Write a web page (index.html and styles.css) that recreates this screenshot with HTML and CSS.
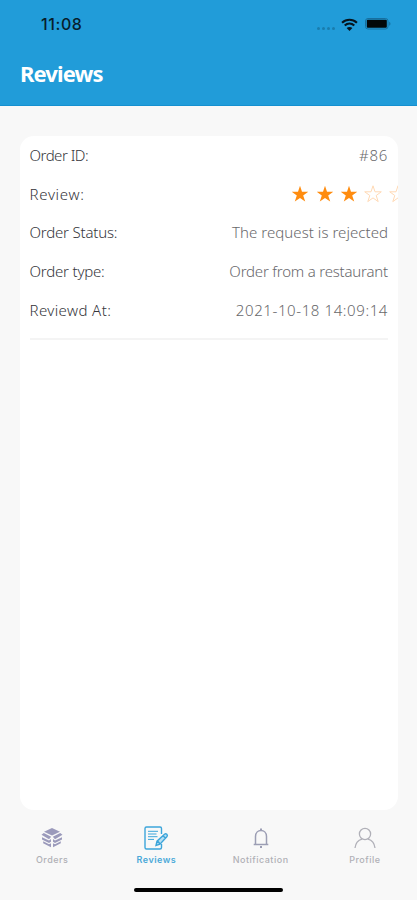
FILE: index.html
```html
<!DOCTYPE html>
<html lang="en">
<head>
  <meta charset="UTF-8" />
  <meta name="viewport" content="width=device-width, initial-scale=1.0"/>
  <title>Reviews</title>
  <link rel="stylesheet" href="styles.css">
</head>
<body>
  <div class="header">
    <div class="status-bar">
      <span class="time">11:08</span>
      <div class="status-icons">
        <div class="signal"><i></i><i></i><i></i><i></i></div>
        <svg class="wifi" width="17" height="13" viewBox="0 0 16 12">
          <path d="M1 4.300C5 .6 11 .6 15 4.300M3.500 7c2.600-2.400 6.400-2.400 9 0" fill="none" stroke="#06141e" stroke-width="2"/>
          <path d="M8 12 5.300 9.300c1.500-1.400 3.900-1.400 5.400 0z" fill="#06141e"/>
        </svg>
        <svg class="battery" width="27" height="12" viewBox="0 0 27 12">
          <rect x=".5" y=".5" width="22.500" height="10.500" rx="2.500" fill="none" stroke="#176f9f"/>
          <rect x="1.800" y="1.800" width="20" height="8" rx="1" fill="#020709"/>
          <path d="M24.200 3.800c1.700.6 1.700 3.400 0 4z" fill="#176f9f"/>
        </svg>
      </div>
    </div>
    <h1 class="title">Reviews</h1>
  </div>

  <div class="card">
    <div class="row">
      <span class="label order-id">Order ID:</span>
      <span class="value number">#86</span>
    </div>
    <div class="row">
      <span class="label review">Review:</span>
      <div class="stars">
        <svg class="star" viewBox="0 0 18 18"><path d="M9 .8l2 6h6.300l-5.100 3.700 2 6.100L9 12.900l-5.200 3.700 2-6.100L.7 6.800H7z"/></svg>
        <svg class="star" viewBox="0 0 18 18"><path d="M9 .8l2 6h6.300l-5.100 3.700 2 6.100L9 12.900l-5.200 3.700 2-6.100L.7 6.800H7z"/></svg>
        <svg class="star" viewBox="0 0 18 18"><path d="M9 .8l2 6h6.300l-5.100 3.700 2 6.100L9 12.900l-5.200 3.700 2-6.100L.7 6.800H7z"/></svg>
        <svg class="star empty" viewBox="0 0 18 18"><path d="M9 .8l2 6h6.300l-5.100 3.700 2 6.100L9 12.900l-5.200 3.700 2-6.100L.7 6.800H7z"/></svg>
        <svg class="star empty" viewBox="0 0 18 18"><path d="M9 .8l2 6h6.300l-5.100 3.700 2 6.100L9 12.900l-5.200 3.700 2-6.100L.7 6.800H7z"/></svg>
      </div>
    </div>
    <div class="row">
      <span class="label">Order Status:</span>
      <span class="value status">The request is rejected</span>
    </div>
    <div class="row">
      <span class="label">Order type:</span>
      <span class="value type">Order from a restaurant</span>
    </div>
    <div class="row">
      <span class="label reviewed">Reviewd At:</span>
      <span class="value date">2021-10-18 14:09:14</span>
    </div>
    <div class="divider"></div>
  </div>

  <div class="tabs">
    <div class="tab">
      <svg width="24" height="26" viewBox="0 0 24 26">
        <g fill="#9b9abb">
          <path d="M12 3 20 6.800 12 10.500 4 6.800z"/>
          <path d="M1.500 9.800 3.800 8l7.400 3.700-2.200 2.600zM22.500 9.800 20.200 8l-7.400 3.700 2.200 2.600z"/>
          <path d="M2 12.300l7 3.300 2-1.700v2.800l-2 1.300-7-3.600zM22 12.300l-7 3.300-2-1.700v2.800l2 1.300 7-3.600z"/>
          <path d="M3.200 16.200l5.800 3 2-1v4l-7.800-4zM20.800 16.200 15 19.200l-2-1v4l7.800-4z"/>
        </g>
      </svg>
      <span>Orders</span>
    </div>
    <div class="tab active">
      <svg width="26" height="26" viewBox="0 0 26 26" fill="none" stroke="#3da5da" stroke-width="1.400">
        <path d="M18.500 9V3.500q0-1.500-1.500-1.500H3.500Q2 2 2 3.500v19Q2 24 3.500 24H17q1.500 0 1.500-1.500V19"/>
        <path d="M5 6.300h10M5 9h8.500M5 11.700h9.500M5 14.400h6" stroke-width="1"/>
        <path d="M13 20.500l1-4.300 7.500-7q1.200-1 2.300.1t.2 2.200l-7 7.600zM20 10.700l2.400 2.300M14.500 16l2.500 2.800" fill="#b9dff3"/>
      </svg>
      <span>Reviews</span>
    </div>
    <div class="tab">
      <svg width="24" height="26" viewBox="0 0 24 26" fill="none" stroke="#9c9eb4" stroke-width="1.500">
        <path d="M4.700 19.400h14.600M6.500 19v-7.500c0-8 11-8 11 0V19"/>
        <path d="M12 3.500v2M11 22h2" stroke-width="2"/>
      </svg>
      <span>Notification</span>
    </div>
    <div class="tab">
      <svg width="24" height="26" viewBox="0 0 24 26" fill="none" stroke="#b0b0b8" stroke-width="1.300">
        <circle cx="12" cy="9" r="5.600"/>
        <path d="M2 23c.6-5.300 3.700-8 7-8.900M22 23c-.6-5.300-3.700-8-7-8.900"/>
      </svg>
      <span>Profile</span>
    </div>
  </div>
  <div class="home-bar"></div>
</body>
</html>
```

FILE: styles.css
```css
* {
  box-sizing: border-box;
}

body {
  height: 900px;
  margin: 0;
  display: flex;
  flex-direction: column;
  background: #f8f8f8;
  font-family: "Noto Sans", sans-serif;
  overflow: hidden;
}

.header {
  height: 106px;
  background: #219cd9;
  border-bottom: 1px solid #1590d0;
}

.status-bar {
  height: 48px;
  padding: 0 25px 0 41px;
  display: flex;
  align-items: center;
  justify-content: space-between;
}

.time {
  font-family: Inter, sans-serif;
  font-size: 16px;
  font-weight: 500;
  letter-spacing: 0.6px;
  color: #071e2c;
}

.status-icons {
  display: flex;
  align-items: center;
}

.signal {
  display: flex;
  gap: 2px;
  margin: 8px 6px 0 0;
}

.signal i {
  width: 3px;
  height: 3px;
  border-radius: 50%;
  background: #197dae;
}

.battery {
  margin-left: 7px;
}

.title {
  margin: 8px 0 0 20px;
  font-size: 22px;
  line-height: 34px;
  font-weight: 700;
  letter-spacing: -0.9px;
  color: white;
}

.card {
  height: 674px;
  margin: 30px 19px 0 20px;
  padding: 0 10px 0 9.500px;
  background: white;
  border-radius: 14px;
  overflow: hidden;
}

.row {
  height: 38.8px;
  display: flex;
  align-items: center;
  justify-content: space-between;
  font-size: 15px;
  font-weight: 300;
  white-space: nowrap;
}

.row span {
  margin-top: -1px;
}

.label {
  color: #35353b;
  letter-spacing: -0.2px;
}

.order-id {
  letter-spacing: -0.5px;
}

.review {
  letter-spacing: 0.7px;
}

.reviewed {
  letter-spacing: 0.4px;
}

.value {
  color: #68686b;
}

.number {
  letter-spacing: 0.7px;
}

.status {
  letter-spacing: 0.05px;
}

.type {
  letter-spacing: -0.2px;
}

.date {
  letter-spacing: 0.6px;
}

.stars {
  display: flex;
  gap: 6.300px;
  margin: -1px -18.500px 0 0;
}

.star {
  width: 18px;
  height: 18px;
  fill: #ff8c0f;
}

.star.empty {
  fill: none;
  stroke: #ffd9b5;
}

.divider {
  height: 2px;
  margin-top: 8px;
  background: #f4f4f4;
}

.tabs {
  height: 78px;
  padding-top: 15px;
  display: flex;
}

.tab {
  width: 25%;
  display: flex;
  flex-direction: column;
  align-items: center;
  font-family: Inter, sans-serif;
  font-size: 9px;
  line-height: 12px;
  font-weight: 500;
  letter-spacing: 0.5px;
  color: #b0b0b6;
}

.tab span {
  margin-top: 3px;
}

.tab.active {
  color: #4aa9d9;
  font-weight: 600;
}

.home-bar {
  width: 149px;
  height: 4px;
  margin: 0 auto;
  border-radius: 2px;
  background: black;
}
```
